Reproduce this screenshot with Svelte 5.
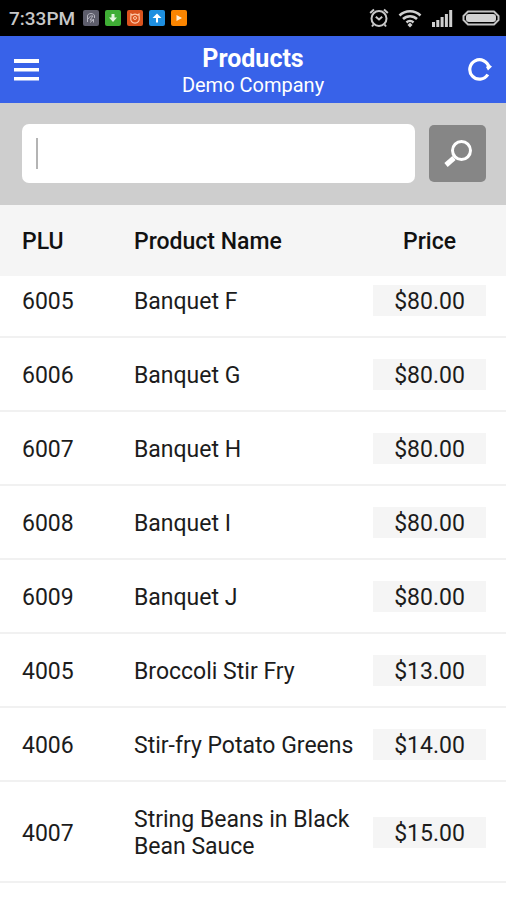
<script>
    let search = $state('');

    const products = [
        { plu: '6005', name: 'Banquet F', price: 80 },
        { plu: '6006', name: 'Banquet G', price: 80 },
        { plu: '6007', name: 'Banquet H', price: 80 },
        { plu: '6008', name: 'Banquet I', price: 80 },
        { plu: '6009', name: 'Banquet J', price: 80 },
        { plu: '4005', name: 'Broccoli Stir Fry', price: 13 },
        { plu: '4006', name: 'Stir-fry Potato Greens', price: 14 },
        { plu: '4007', name: 'String Beans in Black Bean Sauce', price: 15 }
    ];

    let shown = $derived(
        products.filter((p) => (p.plu + ' ' + p.name).toLowerCase().includes(search.trim().toLowerCase()))
    );
</script>

<div class="status">
    <span class="status__time">7:33PM</span>
    <div class="status__apps">
        <svg width="16" height="16" viewBox="0 0 16 16" fill="none" stroke="#b4b4be">
            <rect width="16" height="16" rx="2" fill="#5d5d6b" stroke="none" />
            <path d="M4.500 12V6c0-1.500 1.500-2.500 3.500-2.500s3.500 1 3.500 2.500v2M5 9l2.500-3H10L7 10h3l-3 2.500M10.500 9v3.500" />
        </svg>
        <svg width="16" height="16" viewBox="0 0 16 16">
            <rect width="16" height="16" rx="2" fill="#3fae35" />
            <path d="M6.500 4h3v3.500H12L8 12 4 7.500h2.500z" fill="#e4f6df" />
        </svg>
        <svg width="16" height="16" viewBox="0 0 16 16" fill="none" stroke="#ffc9aa">
            <rect width="16" height="16" rx="2" fill="#d9531e" stroke="none" />
            <path d="M4 4l1.500 1a4.500 4.500 0 0 1 5 0L12 4l.2 4a4.300 4.300 0 1 1-8.400 0z" stroke-width="1.200" />
            <circle cx="8" cy="8" r="1.500" />
        </svg>
        <svg width="16" height="16" viewBox="0 0 16 16">
            <rect width="16" height="16" rx="2" fill="#1e8fe0" />
            <path d="M8 3.500L12.500 8H9v4.500H7V8H3.500z" fill="#fff" />
        </svg>
        <svg width="16" height="16" viewBox="0 0 16 16">
            <rect width="16" height="16" rx="2" fill="#fb8500" />
            <path d="M5.500 5L11 8l-5.500 3z" fill="#fff0d8" />
        </svg>
    </div>
    <div class="status__icons">
        <svg width="20" height="20" viewBox="0 0 20 20" fill="none" stroke="#c8c8c8" stroke-width="2">
            <circle cx="10" cy="10.500" r="7.500" />
            <path d="M1.200 5L5 1.500M18.800 5L15 1.500M4.500 16.500L3 18.500M15.500 16.500l1.500 2M6.800 8.800L10 11.500l3.200-2.700" />
        </svg>
        <svg width="24" height="20" viewBox="0 0 24 20" fill="none" stroke="#d0d0d0" stroke-width="2.500">
            <path d="M1.500 7.500a15 15 0 0 1 21 0M5 11a10 10 0 0 1 14 0M8.500 14.500a5 5 0 0 1 7 0" />
            <path d="M12 14.500l2.500 2.500-2.500 2.500L9.500 17z" fill="#d0d0d0" stroke="none" />
        </svg>
        <svg width="22" height="18" viewBox="0 0 22 18" fill="#cfcfcf">
            <path d="M1 13h3v5H1zM5.300 11h3v7h-3zM9.600 8h3v10h-3zM13.900 5h3v13h-3zM18.200 1h3v17h-3z" />
        </svg>
        <svg width="38" height="16" viewBox="0 0 38 16">
            <path d="M6 1.500h26L36.500 6v4L32 14.500H6L1.500 10V6z" fill="none" stroke="#c4c4c4" stroke-width="2" stroke-linejoin="round" />
            <rect x="4" y="4" width="30" height="8" rx="3" fill="#d2d2d2" />
        </svg>
    </div>
</div>

<header class="header">
    <button class="header__button" aria-label="Menu">
        <svg width="25" height="22" viewBox="0 0 25 22" fill="#fff">
            <path d="M0 0h25v4H0zM0 9h25v3.500H0zM0 18h25v3.500H0z" />
        </svg>
    </button>
    <div class="header__titles">
        <h1>Products</h1>
        <p>Demo Company</p>
    </div>
    <button class="header__button" aria-label="Refresh">
        <svg width="26" height="26" viewBox="0 0 26 26">
            <path d="M20.800 17.500A9.700 9.700 0 1 1 22 10.500" fill="none" stroke="#fff" stroke-width="3.200" />
            <path d="M25 9.500L21 13.500l-2-3.500 3-2.500z" fill="#fff" />
        </svg>
    </button>
</header>

<form class="search" onsubmit={(e) => e.preventDefault()}>
    <div class="search__field">
        <span class="search__caret"></span>
        <input type="text" aria-label="Search products" bind:value={search} />
    </div>
    <button aria-label="Search">
        <svg width="30" height="30" viewBox="0 0 30 30" fill="none" stroke="#fff">
            <circle cx="18.500" cy="11.500" r="9" stroke-width="3" />
            <path d="M11 19l-8 7" stroke-width="5" />
        </svg>
    </button>
</form>

<table class="products">
    <thead>
        <tr>
            <th class="plu">PLU</th>
            <th>Product Name</th>
            <th class="price">Price</th>
        </tr>
    </thead>
    <tbody>
        {#each shown as product (product.plu)}
            <tr>
                <td class="plu">{product.plu}</td>
                <td class="name">{product.name}</td>
                <td class="price"><span>${product.price.toFixed(2)}</span></td>
            </tr>
        {/each}
    </tbody>
</table>

<style>
    :global(body) {
        background: #fff;
        color: #1c1c1c;
        font-family: Roboto, sans-serif;
        font-size: 23px;
    }

    svg {
        display: block;
    }

    button {
        display: flex;
        align-items: center;
        justify-content: center;
        border: 0;
        padding: 0;
        cursor: pointer;
    }

    .status {
        display: flex;
        align-items: center;
        height: 36px;
        padding: 0 6px 0 9px;
        background: #000;
        color: #c8c8c8;
    }

    .status__time {
        font-size: 19px;
        font-weight: 500;
    }

    .status__apps {
        display: flex;
        gap: 6px;
        margin-left: 8px;
    }

    .status__icons {
        display: flex;
        align-items: center;
        gap: 9px;
        margin-left: auto;
    }

    .header {
        display: flex;
        align-items: center;
        justify-content: space-between;
        height: 67px;
        padding: 0 13px 0 14px;
        background: #3862e9;
        color: #fff;
        text-align: center;
    }

    .header__button {
        min-height: 48px;
        background: none;
    }

    .header__titles {
        padding-top: 5px;
    }

    .header h1 {
        margin: 0;
        font-size: 25px;
        font-weight: 700;
        line-height: 27px;
    }

    .header p {
        margin: 0;
        font-size: 20px;
        line-height: 27px;
    }

    .search {
        display: flex;
        align-items: center;
        gap: 14px;
        padding: 21px 20px 22px 22px;
        background: #cecece;
    }

    .search__field {
        display: flex;
        flex: 1;
        align-items: center;
        height: 59px;
        padding: 0 14px;
        border-radius: 7px;
        background: #fff;
    }

    .search__caret {
        width: 2px;
        height: 31px;
        background: #b4b4b4;
    }

    .search input {
        flex: 1;
        min-width: 0;
        border: 0;
        padding: 0;
        outline: 0;
        background: none;
        font: inherit;
    }

    .search button {
        width: 57px;
        height: 57px;
        border-radius: 5px;
        background: #868686;
    }

    .products {
        width: 100%;
        border-collapse: separate;
        border-spacing: 0;
        table-layout: fixed;
    }

    th {
        padding: 23px 0 21px;
        background: #f5f5f5;
        color: #111;
        font-weight: 500;
        line-height: 27px;
        text-align: left;
    }

    td {
        padding: 24px 0 21px;
        border-bottom: 2px solid #f1f1f1;
        line-height: 27px;
    }

    .plu {
        width: 112px;
        padding-left: 22px;
    }

    .name {
        padding-right: 16px;
    }

    .price {
        width: 113px;
        padding-right: 20px;
        text-align: center;
    }

    td.price {
        padding-top: 21px;
        padding-bottom: 20px;
    }

    .price span {
        display: block;
        padding-top: 2px;
        background: #f5f5f5;
        line-height: 29px;
    }

    /* the list sits closer under its heading */
    tbody tr:first-child td {
        padding-top: 12px;
    }

    tbody tr:first-child td.price {
        padding-top: 9px;
    }
</style>
